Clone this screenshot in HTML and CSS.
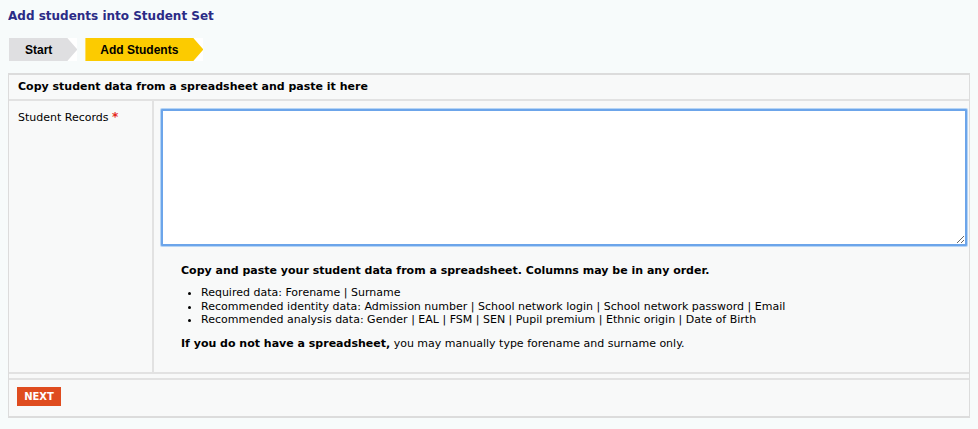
FILE: index.html
```html
<!DOCTYPE html>
<html>
<head>
<meta charset="utf-8">
<link rel="stylesheet" href="styles.css">
</head>
<body>
<h1 class="title">Add students into Student Set</h1>
<div class="crumbs">
  <div class="crumb crumb-done"><span class="crumb-label">Start</span></div>
  <div class="crumb crumb-active"><span class="crumb-label">Add Students</span></div>
</div>
<div class="panel">
  <div class="panel-head">Copy student data from a spreadsheet and paste it here</div>
  <div class="row">
    <div class="label-cell">Student Records <span class="req">*</span></div>
    <div class="field-cell">
      <div class="ta-wrap"><textarea class="ta" autofocus></textarea></div>
      <div class="help">
        <p class="help-lead">Copy and paste your student data from a spreadsheet. Columns may be in any order.</p>
        <ul class="help-list">
          <li>Required data: Forename | Surname</li>
          <li>Recommended identity data: Admission number | School network login | School network password | Email</li>
          <li>Recommended analysis data: Gender | EAL | FSM | SEN | Pupil premium | Ethnic origin | Date of Birth</li>
        </ul>
        <p class="help-foot"><b>If you do not have a spreadsheet,</b> you may manually type forename and surname only.</p>
      </div>
    </div>
  </div>
  <div class="spacer"></div>
  <div class="panel-foot"><button class="btn-next">NEXT</button></div>
</div>
</body>
</html>
```
FILE: styles.css
```css
html, body { background: #f7fbfb; }
body {
  margin: 8px;
  font-family: "DejaVu Sans", Verdana, sans-serif;
  font-size: 11px;
  color: #000;
}
.title {
  margin: 0;
  padding-top: 1px;
  font-size: 12px;
  font-weight: bold;
  color: #2b2b86;
  line-height: 14px;
}
.crumbs {
  display: flex;
  margin-top: 15px;
  height: 23px;
  padding-left: 1px;
}
.crumb {
  height: 23px;
  background: #fff;
  margin-right: 8px;
}
.crumb-label {
  display: flex;
  align-items: center;
  height: 23px;
  font-family: "Liberation Sans", Arial, sans-serif;
  font-weight: bold;
  font-size: 12px;
  clip-path: polygon(0 0, calc(100% - 10px) 0, 100% 50%, calc(100% - 10px) 100%, 0 100%);
}
.crumb-done .crumb-label { background: #dfdfe1; padding: 0 25px 0 16px; }
.crumb-active .crumb-label { background: #fccb00; padding: 0 25px 0 15px; }
.panel {
  margin: 12px -1px 0 -1px;
  border: 2px solid #dcdcdc;
  background: #f8f9f9;
}
.panel-head {
  font-weight: bold;
  padding: 5px 9px 0;
  height: 19px;
  line-height: 14px;
  border-bottom: 2px solid #e2e2e2;
}
.row {
  display: flex;
  height: 271px;
}
.label-cell {
  width: 134px;
  flex: none;
  padding: 9px 0 0 9px;
  border-right: 2px solid #e2e2e2;
}
.req { color: #e5281c; font-weight: bold; font-size: 12px; }
.field-cell {
  flex: 1;
  padding: 7px 0 0 6px;
}
.ta-wrap { display: flex; padding: 1px 2px 0 1px; }
.ta {
  flex: 1;
  height: 129px;
  margin: 0;
  border: 2px solid #6ca5ea;
  box-shadow: 0 0 0 1px #b5d4f5;
  border-radius: 1px;
  outline: none;
  background: #fff;
  resize: both;
}
.help { padding-left: 21px; }
.help-lead { font-weight: bold; margin: 18px 0 0; line-height: 14px; }
.help-list { margin: 8px 0 0; padding-left: 20px; line-height: 13.5px; }
.help-foot { margin: 10px 0 0; line-height: 14px; }
.spacer {
  height: 4px;
  border-top: 2px solid #e2e2e2;
  border-bottom: 2px solid #e2e2e2;
}
.panel-foot {
  padding: 7px 8px 9px;
  height: 20px;
}
.btn-next {
  display: block;
  width: 44px;
  height: 19px;
  border: none;
  background: #df4c1f;
  color: #fff;
  font-family: "DejaVu Sans", Verdana, sans-serif;
  font-weight: bold;
  font-size: 10px;
  padding: 0;
}
```
